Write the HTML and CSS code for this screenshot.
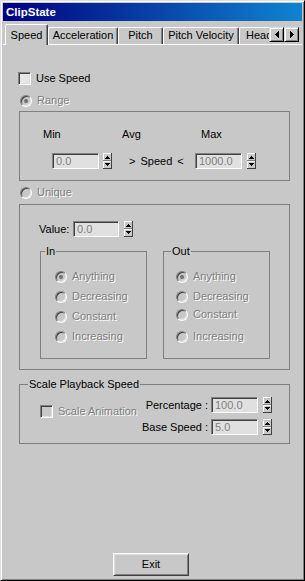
FILE: index.html
```html
<!DOCTYPE html>
<html>
<head>
<meta charset="utf-8">
<title>ClipState</title>
<link rel="stylesheet" href="styles.css">
</head>
<body>
<div class="window">
  <div class="titlebar">ClipState</div>
  <div class="tabstrip">
    <div class="tabs">
      <div class="tab active tab-speed">Speed</div>
      <div class="tab tab-accel">Acceleration</div>
      <div class="tab tab-pitch">Pitch</div>
      <div class="tab tab-pv">Pitch Velocity</div>
      <div class="tab tab-head">Heading</div>
    </div>
    <div class="tab-scroll">
      <span class="scroll-btn"><svg width="4" height="7" viewBox="0 0 4 7" shape-rendering="crispEdges"><rect x="3" y="0" width="1" height="7"/><rect x="2" y="1" width="1" height="5"/><rect x="1" y="2" width="1" height="3"/><rect x="0" y="3" width="1" height="1"/></svg></span>
      <span class="scroll-btn"><svg width="4" height="7" viewBox="0 0 4 7" shape-rendering="crispEdges"><rect x="0" y="0" width="1" height="7"/><rect x="1" y="1" width="1" height="5"/><rect x="2" y="2" width="1" height="3"/><rect x="3" y="3" width="1" height="1"/></svg></span>
    </div>
  </div>

  <div class="page">
    <div class="row use-speed"><span class="check"></span><span class="label">Use Speed</span></div>

    <div class="row mode-row"><span class="radio on"></span><span class="label dis">Range</span></div>

    <div class="group range-box">
      <div class="mm-labels"><span>Min</span><span>Avg</span><span>Max</span></div>
      <div class="mm-edits">
        <span class="edit">0.0</span>
        <span class="spin"><svg width="9" height="16" viewBox="0 0 9 16" shape-rendering="crispEdges"><rect width="9" height="16" fill="#c8c8c8"/><rect x="0" y="0" width="8" height="1" fill="#fff"/><rect x="0" y="0" width="1" height="7" fill="#fff"/><rect x="0" y="7" width="9" height="1" fill="#808080"/><rect x="8" y="0" width="1" height="8" fill="#404040"/><rect x="0" y="8" width="8" height="1" fill="#fff"/><rect x="0" y="8" width="1" height="7" fill="#fff"/><rect x="0" y="15" width="9" height="1" fill="#404040"/><rect x="8" y="8" width="1" height="8" fill="#404040"/><rect x="4" y="3" width="1" height="1"/><rect x="3" y="4" width="3" height="1"/><rect x="2" y="5" width="5" height="1"/><rect x="2" y="10" width="5" height="1"/><rect x="3" y="11" width="3" height="1"/><rect x="4" y="12" width="1" height="1"/></svg></span>
        <span class="speed-cmp">&gt; Speed &lt;</span>
        <span class="edit">1000.0</span>
        <span class="spin spin-far"><svg width="9" height="16" viewBox="0 0 9 16" shape-rendering="crispEdges"><rect width="9" height="16" fill="#c8c8c8"/><rect x="0" y="0" width="8" height="1" fill="#fff"/><rect x="0" y="0" width="1" height="7" fill="#fff"/><rect x="0" y="7" width="9" height="1" fill="#808080"/><rect x="8" y="0" width="1" height="8" fill="#404040"/><rect x="0" y="8" width="8" height="1" fill="#fff"/><rect x="0" y="8" width="1" height="7" fill="#fff"/><rect x="0" y="15" width="9" height="1" fill="#404040"/><rect x="8" y="8" width="1" height="8" fill="#404040"/><rect x="4" y="3" width="1" height="1"/><rect x="3" y="4" width="3" height="1"/><rect x="2" y="5" width="5" height="1"/><rect x="2" y="10" width="5" height="1"/><rect x="3" y="11" width="3" height="1"/><rect x="4" y="12" width="1" height="1"/></svg></span>
      </div>
    </div>

    <div class="row mode-row unique-row"><span class="radio"></span><span class="label dis">Unique</span></div>

    <div class="group unique-box">
      <div class="value-row">
        <span class="value-label">Value:</span>
        <span class="edit edit-value">0.0</span>
        <span class="spin spin-far"><svg width="9" height="16" viewBox="0 0 9 16" shape-rendering="crispEdges"><rect width="9" height="16" fill="#c8c8c8"/><rect x="0" y="0" width="8" height="1" fill="#fff"/><rect x="0" y="0" width="1" height="7" fill="#fff"/><rect x="0" y="7" width="9" height="1" fill="#808080"/><rect x="8" y="0" width="1" height="8" fill="#404040"/><rect x="0" y="8" width="8" height="1" fill="#fff"/><rect x="0" y="8" width="1" height="7" fill="#fff"/><rect x="0" y="15" width="9" height="1" fill="#404040"/><rect x="8" y="8" width="1" height="8" fill="#404040"/><rect x="4" y="3" width="1" height="1"/><rect x="3" y="4" width="3" height="1"/><rect x="2" y="5" width="5" height="1"/><rect x="2" y="10" width="5" height="1"/><rect x="3" y="11" width="3" height="1"/><rect x="4" y="12" width="1" height="1"/></svg></span>
      </div>
      <div class="io-row">
        <div class="group sub-box in-box">
          <span class="group-title">In</span>
          <div class="row opt"><span class="radio on"></span><span class="label dis">Anything</span></div>
          <div class="row opt"><span class="radio"></span><span class="label dis">Decreasing</span></div>
          <div class="row opt"><span class="radio"></span><span class="label dis">Constant</span></div>
          <div class="row opt"><span class="radio"></span><span class="label dis">Increasing</span></div>
        </div>
        <div class="group sub-box out-box">
          <span class="group-title">Out</span>
          <div class="row opt"><span class="radio on"></span><span class="label dis">Anything</span></div>
          <div class="row opt"><span class="radio"></span><span class="label dis">Decreasing</span></div>
          <div class="row opt opt-tight"><span class="radio"></span><span class="label dis">Constant</span></div>
          <div class="row opt opt-loose"><span class="radio"></span><span class="label dis">Increasing</span></div>
        </div>
      </div>
    </div>

    <div class="group scale-box">
      <span class="group-title">Scale Playback Speed</span>
      <div class="scale-body">
        <div class="row scale-check"><span class="check disabled"></span><span class="label dis">Scale Animation</span></div>
        <div class="scale-fields">
          <div class="field-row">
            <span class="field-label">Percentage :</span>
            <span class="edit">100.0</span>
            <span class="spin spin-far"><svg width="9" height="16" viewBox="0 0 9 16" shape-rendering="crispEdges"><rect width="9" height="16" fill="#c8c8c8"/><rect x="0" y="0" width="8" height="1" fill="#fff"/><rect x="0" y="0" width="1" height="7" fill="#fff"/><rect x="0" y="7" width="9" height="1" fill="#808080"/><rect x="8" y="0" width="1" height="8" fill="#404040"/><rect x="0" y="8" width="8" height="1" fill="#fff"/><rect x="0" y="8" width="1" height="7" fill="#fff"/><rect x="0" y="15" width="9" height="1" fill="#404040"/><rect x="8" y="8" width="1" height="8" fill="#404040"/><rect x="4" y="3" width="1" height="1"/><rect x="3" y="4" width="3" height="1"/><rect x="2" y="5" width="5" height="1"/><rect x="2" y="10" width="5" height="1"/><rect x="3" y="11" width="3" height="1"/><rect x="4" y="12" width="1" height="1"/></svg></span>
          </div>
          <div class="field-row">
            <span class="field-label">Base Speed :</span>
            <span class="edit">5.0</span>
            <span class="spin spin-far"><svg width="9" height="16" viewBox="0 0 9 16" shape-rendering="crispEdges"><rect width="9" height="16" fill="#c8c8c8"/><rect x="0" y="0" width="8" height="1" fill="#fff"/><rect x="0" y="0" width="1" height="7" fill="#fff"/><rect x="0" y="7" width="9" height="1" fill="#808080"/><rect x="8" y="0" width="1" height="8" fill="#404040"/><rect x="0" y="8" width="8" height="1" fill="#fff"/><rect x="0" y="8" width="1" height="7" fill="#fff"/><rect x="0" y="15" width="9" height="1" fill="#404040"/><rect x="8" y="8" width="1" height="8" fill="#404040"/><rect x="4" y="3" width="1" height="1"/><rect x="3" y="4" width="3" height="1"/><rect x="2" y="5" width="5" height="1"/><rect x="2" y="10" width="5" height="1"/><rect x="3" y="11" width="3" height="1"/><rect x="4" y="12" width="1" height="1"/></svg></span>
          </div>
        </div>
      </div>
    </div>

    <div class="footer"><button class="btn">Exit</button></div>
  </div>
</div>
</body>
</html>
```
FILE: styles.css
```css
* { box-sizing: border-box; }
html, body { margin: 0; padding: 0; }
body {
  width: 305px;
  height: 581px;
  overflow: hidden;
  background: #c8c8c8;
  font-family: "Liberation Sans", Arial, sans-serif;
  font-size: 11px;
  line-height: 13px;
  color: #000;
}
.window {
  width: 305px;
  height: 581px;
  display: flex;
  flex-direction: column;
  padding: 2px;
  border: 1px solid;
  border-color: #dfdfdf #000 #000 #dfdfdf;
  box-shadow: inset 1px 1px #fff, inset -1px -1px #808080;
  background: #c8c8c8;
}
.titlebar {
  flex: none;
  height: 18px;
  display: flex;
  align-items: center;
  padding-left: 3px;
  background: linear-gradient(to right, #000080, #1084d0);
  color: #fff;
  font-weight: bold;
  font-size: 11.5px;
}

/* tabs */
.tabstrip {
  flex: none;
  height: 24px;
  display: flex;
  background: linear-gradient(#fff, #fff) left bottom / 100% 1px no-repeat;
}
.tabs {
  flex: 1;
  height: 24px;
  display: flex;
  align-items: flex-end;
  overflow: hidden;
}
.tab {
  flex: none;
  height: 17px;
  margin-bottom: 1px;
  padding-top: 1px;
  border: 1px solid;
  border-bottom: 0;
  border-color: #fff #404040 transparent #fff;
  border-radius: 2px 2px 0 0;
  box-shadow: inset -1px 0 #808080;
  text-align: center;
  white-space: nowrap;
}
.tab.active {
  height: 21px;
  margin-bottom: 0;
  padding-top: 4px;
  background: #c8c8c8;
  position: relative;
  z-index: 1;
}
.tab-speed { width: 43px; margin-left: 2px; }
.tab-accel { width: 70px; }
.tab-pitch { width: 45px; }
.tab-pv { width: 76px; }
.tab-head { width: 55px; }
.tab-scroll {
  flex: none;
  display: flex;
  margin: 6px 3px 0 0;
  align-self: flex-start;
}
.scroll-btn {
  width: 15px;
  height: 15px;
  display: flex;
  align-items: center;
  justify-content: center;
  border: 1px solid;
  border-color: #dfdfdf #000 #000 #dfdfdf;
  box-shadow: inset 1px 1px #fff, inset -1px -1px #808080;
  background: #c8c8c8;
}
.scroll-btn svg { display: block; fill: #000; }

/* page */
.page {
  flex: 1;
  display: flex;
  flex-direction: column;
}
.row {
  display: flex;
  align-items: center;
  height: 13px;
}
.label { margin-left: 5px; white-space: nowrap; }
.dis { color: #808080; text-shadow: 1px 1px 0 #fff; }

.check {
  flex: none;
  width: 13px;
  height: 13px;
  border: 1px solid;
  border-color: #808080 #fff #fff #808080;
  box-shadow: inset 1px 1px #404040, inset -1px -1px #dfdfdf;
  background: #e6e6e6;
}
.check.disabled { background: #c8c8c8; }

.radio {
  flex: none;
  width: 12px;
  height: 12px;
  border-radius: 50%;
  border: 1px solid;
  border-color: #808080 #fff #fff #808080;
  box-shadow: inset 1px 1px #404040, inset -1px -1px #dfdfdf;
  background: #c8c8c8;
  display: flex;
  align-items: center;
  justify-content: center;
}
.radio.on::after {
  content: "";
  width: 4px;
  height: 4px;
  border-radius: 50%;
  background: #707070;
}

.edit {
  flex: none;
  width: 47px;
  height: 16px;
  padding: 0 0 0 3px;
  border: 1px solid;
  border-color: #808080 #fff #fff #808080;
  box-shadow: inset 1px 1px #404040, inset -1px -1px #dfdfdf;
  background: #e0e0e0;
  color: #808080;
  line-height: 14px;
  white-space: nowrap;
}
.spin { flex: none; width: 9px; height: 16px; margin-left: 4px; }
.spin svg { display: block; fill: #000; }
.spin-far { margin-left: 5px; }

.group {
  flex: none;
  margin-left: 16px;
  width: 271px;
  border: 1px solid #808080;
  display: flex;
  flex-direction: column;
}
.group-title {
  align-self: flex-start;
  height: 13px;
  margin-top: -7px;
  padding: 0 1px;
  background: #c8c8c8;
  white-space: nowrap;
}

.use-speed { margin: 27px 0 0 15px; }
.mode-row { margin: 9px 0 0 17px; }
.unique-row { margin-top: 5px; }

/* range */
.range-box { margin-top: 4px; height: 70px; }
.mm-labels {
  display: grid;
  grid-template-columns: 79px 79px auto;
  margin: 16px 0 0 23px;
  height: 13px;
}
.mm-edits {
  display: flex;
  align-items: center;
  height: 16px;
  margin: 12px 0 0 32px;
}
.speed-cmp {
  flex: none;
  width: 83px;
  padding-left: 17px;
  word-spacing: 2px;
  white-space: nowrap;
}

/* unique */
.unique-box { margin-top: 5px; height: 166px; }
.value-row {
  display: flex;
  align-items: center;
  height: 16px;
  margin: 16px 0 0 19px;
}
.value-label { width: 34px; }
.edit-value { width: 46px; }
.io-row {
  display: flex;
  gap: 16px;
  margin: 14px 0 0 20px;
}
.sub-box { margin-left: 0; width: 107px; height: 108px; }
.in-box .group-title { margin-left: 4px; }
.out-box .group-title { margin-left: 7px; }
.opt { margin-top: 7px; }
.group-title + .opt { margin-top: 12px; }
.in-box .opt { margin-left: 14px; }
.out-box .opt { margin-left: 12px; }
.out-box .opt-tight { margin-top: 5px; }
.out-box .opt-loose { margin-top: 9px; }

/* scale */
.scale-box { margin-top: 14px; height: 60px; }
.scale-box .group-title { margin-left: 8px; }
.scale-body {
  display: flex;
  margin: 6px 0 0 20px;
}
.scale-check { width: 98px; margin-top: 8px; }
.scale-fields {
  display: flex;
  flex-direction: column;
  gap: 6px;
}
.field-row {
  display: flex;
  align-items: center;
  height: 16px;
}
.field-label {
  width: 70px;
  margin-right: 3px;
  text-align: right;
  white-space: nowrap;
}

/* footer */
.footer {
  margin-top: auto;
  margin-bottom: 2px;
  padding-left: 110px;
  display: flex;
}
.btn {
  width: 76px;
  height: 23px;
  padding: 0;
  border: 1px solid;
  border-color: #fff #404040 #404040 #fff;
  box-shadow: inset 1px 1px #dfdfdf, inset -1px -1px #808080;
  background: #c8c8c8;
  font: inherit;
  color: #000;
}
```
